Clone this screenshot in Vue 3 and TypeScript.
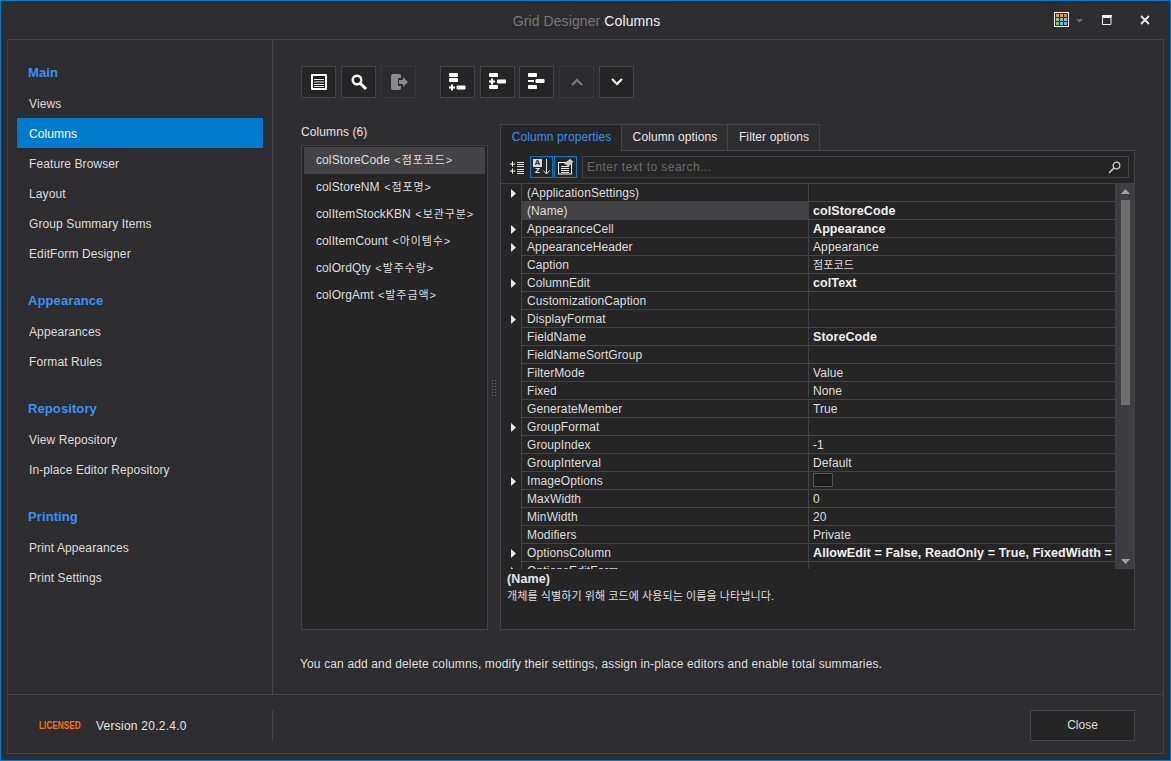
<script setup lang="ts">
interface Row { name: string; value?: string; bold?: boolean; expand?: boolean; selected?: boolean; swatch?: boolean }

const groups = [
  { title: 'Main', items: ['Views', 'Columns', 'Feature Browser', 'Layout', 'Group Summary Items', 'EditForm Designer'] },
  { title: 'Appearance', items: ['Appearances', 'Format Rules'] },
  { title: 'Repository', items: ['View Repository', 'In-place Editor Repository'] },
  { title: 'Printing', items: ['Print Appearances', 'Print Settings'] },
]

const columns = [
  { name: 'colStoreCode', ko: '점포코드' },
  { name: 'colStoreNM', ko: '점포명' },
  { name: 'colItemStockKBN', ko: '보관구분' },
  { name: 'colItemCount', ko: '아이템수' },
  { name: 'colOrdQty', ko: '발주수량' },
  { name: 'colOrgAmt', ko: '발주금액' },
]

const rows: Row[] = [
  { name: '(ApplicationSettings)', expand: true },
  { name: '(Name)', value: 'colStoreCode', bold: true, selected: true },
  { name: 'AppearanceCell', value: 'Appearance', bold: true, expand: true },
  { name: 'AppearanceHeader', value: 'Appearance', expand: true },
  { name: 'Caption', value: '점포코드' },
  { name: 'ColumnEdit', value: 'colText', bold: true, expand: true },
  { name: 'CustomizationCaption' },
  { name: 'DisplayFormat', expand: true },
  { name: 'FieldName', value: 'StoreCode', bold: true },
  { name: 'FieldNameSortGroup' },
  { name: 'FilterMode', value: 'Value' },
  { name: 'Fixed', value: 'None' },
  { name: 'GenerateMember', value: 'True' },
  { name: 'GroupFormat', expand: true },
  { name: 'GroupIndex', value: '-1' },
  { name: 'GroupInterval', value: 'Default' },
  { name: 'ImageOptions', swatch: true, expand: true },
  { name: 'MaxWidth', value: '0' },
  { name: 'MinWidth', value: '20' },
  { name: 'Modifiers', value: 'Private' },
  { name: 'OptionsColumn', value: 'AllowEdit = False, ReadOnly = True, FixedWidth =', bold: true, expand: true },
  { name: 'OptionsEditForm', expand: true },
]

const palette = ['#e0a060', '#e09a5a', '#e0805a', '#a8c878', '#7ac8b0', '#a8a8c8', '#78c878', '#68c0e8', '#78a8d8']
</script>

<template>
  <div class="window">
    <header class="titlebar">
      <div class="title"><span class="dim">Grid Designer</span> <span>Columns</span></div>
      <div class="controls">
        <div class="palette"><i v-for="c in palette" :key="c" :style="{ background: c }"></i></div>
        <svg class="caret" width="7" height="4" viewBox="0 0 7 4"><path d="M0 0h7L3.500 4z" fill="#666"/></svg>
        <svg class="max" width="10" height="10" viewBox="0 0 10 10"><path d="M.5 2.500h8.500v7H.5z" fill="none" stroke="#eee"/><path d="M0 0h10v2.500H0z" fill="#eee"/></svg>
        <svg class="close" width="10" height="10" viewBox="0 0 10 10"><path d="M1 1l8 8M9 1L1 9" stroke="#eee" stroke-width="1.800"/></svg>
      </div>
    </header>

    <div class="frame">
      <div class="upper">
        <nav class="sidebar">
          <section v-for="g in groups" :key="g.title" class="group">
            <h3>{{ g.title }}</h3>
            <a v-for="it in g.items" :key="it" :class="{ active: it === 'Columns' }">{{ it }}</a>
          </section>
        </nav>

        <main class="main">
          <div class="toolbar">
            <button class="tb">
              <svg width="16" height="16" viewBox="0 0 16 16"><rect width="16" height="16" rx="1" fill="#fff"/><rect x="2" y="2" width="12" height="12" fill="#1e1e1e"/><path d="M3 5.500h10M3 8h10M3 10.500h10M3 12.500h10" stroke="#eee"/></svg>
            </button>
            <button class="tb">
              <svg width="18" height="18" viewBox="0 0 18 18"><circle cx="7" cy="7" r="4.300" fill="none" stroke="#fff" stroke-width="2.400"/><path d="M10.500 10.500L16 16" stroke="#fff" stroke-width="3"/></svg>
            </button>
            <button class="tb off">
              <svg width="18" height="18" viewBox="0 0 18 18"><path d="M3 1h6a2 2 0 0 1 2 2v2H8v8h3v2a2 2 0 0 1-2 2H3a2 2 0 0 1-2-2V3a2 2 0 0 1 2-2z" fill="#8a8a8a"/><path d="M9 7h4V4l5 5-5 5v-3H9z" fill="#8a8a8a"/></svg>
            </button>
            <button class="tb sep">
              <svg width="18" height="18" viewBox="0 0 18 18"><g fill="#fff"><rect width="9" height="4" rx="1"/><rect y="5" width="9" height="4" rx="1"/><path d="M2 11.500h2v2h2v2H4v2H2v-2H0v-2h2z"/><rect x="7.500" y="12.500" width="9" height="4" rx="1"/></g></svg>
            </button>
            <button class="tb">
              <svg width="18" height="18" viewBox="0 0 18 18"><g fill="#fff"><rect width="9" height="4" rx="1"/><path d="M2 5.500h2v2h2v2H4v2H2v-2H0v-2h2z"/><rect x="8" y="6.500" width="9" height="4" rx="1"/><rect y="12" width="9" height="4" rx="1"/></g></svg>
            </button>
            <button class="tb tight">
              <svg width="18" height="18" viewBox="0 0 18 18"><g fill="#fff"><rect width="9" height="4" rx="1"/><rect y="7" width="6" height="2"/><rect x="7.500" y="6" width="9" height="4" rx="1"/><rect y="12" width="9" height="4" rx="1"/></g></svg>
            </button>
            <button class="tb off">
              <svg width="12" height="8" viewBox="0 0 12 8"><path d="M1 7l5-5 5 5" fill="none" stroke="#7c7c7c" stroke-width="2"/></svg>
            </button>
            <button class="tb">
              <svg width="12" height="8" viewBox="0 0 12 8"><path d="M1 1l5 5 5-5" fill="none" stroke="#fff" stroke-width="2"/></svg>
            </button>
          </div>

          <div class="body">
            <div class="col-list">
              <div class="col-label">Columns (6)</div>
              <ul class="list">
                <li v-for="(c, i) in columns" :key="c.name" :class="{ on: i === 0 }">
                  {{ c.name }} <span class="ko">&lt;{{ c.ko }}&gt;</span>
                </li>
              </ul>
            </div>

            <div class="splitter"><span class="grip"><i v-for="n in 12" :key="n"></i></span></div>

            <div class="props">
              <div class="tabs">
                <div class="tab active">Column properties</div>
                <div class="tab w2">Column options</div>
                <div class="tab w3">Filter options</div>
              </div>
              <div class="panel">
                <div class="ptools">
                  <svg class="cat" width="14" height="13" viewBox="0 0 14 13"><path d="M2.500 .5v5M0 3h5M2.500 7.500v5M0 10h5" stroke="#fff"/><path d="M7 1.500h7M7 3.500h7M7 5.500h7M7 8.500h7M7 10.500h7M7 12.500h7" stroke="#ddd"/></svg>
                  <button class="pbtn az">
                    <span class="azt"><b class="a">A</b><b>Z</b></span>
                    <svg width="7" height="16" viewBox="0 0 7 16"><path d="M3.500 0v15M.5 11.500l3 3.500 3-3.500" fill="none" stroke="#ddd"/></svg>
                  </button>
                  <button class="pbtn">
                    <svg width="17" height="16" viewBox="0 0 17 16"><rect x="1.500" y="3.500" width="13" height="11.500" fill="none" stroke="#f2f2f2"/><path d="M4 7.500h8M4 9.500h8M4 11.500h8M4 13.500h8" stroke="#e8e8e8"/><path d="M7 4.500L13 0l3.500 2.500-5 5z" fill="#c8c8c8"/></svg>
                  </button>
                  <div class="search">
                    <span>Enter text to search...</span>
                    <svg width="13" height="13" viewBox="0 0 13 13"><circle cx="8.500" cy="4.500" r="3.300" fill="none" stroke="#ccc" stroke-width="1.300"/><path d="M6 7l-5 5" stroke="#ccc" stroke-width="1.600"/></svg>
                  </div>
                </div>

                <div class="grid-wrap">
                  <div class="grid">
                    <div v-for="r in rows" :key="r.name" class="row" :class="{ sel: r.selected }">
                      <div class="exp"><svg v-if="r.expand" width="5" height="9" viewBox="0 0 5 9"><path d="M0 0l5 4.500L0 9z" fill="#e6e6e6"/></svg></div>
                      <div class="pname">{{ r.name }}</div>
                      <div class="pval" :class="{ b: r.bold, small: r.value === '점포코드' }">
                        <span v-if="r.swatch" class="swatch"></span>{{ r.value }}
                      </div>
                    </div>
                  </div>
                  <div class="scroll">
                    <svg class="up" width="9" height="5" viewBox="0 0 9 5"><path d="M0 5l4.500-5L9 5z" fill="#a0a0a0"/></svg>
                    <div class="track"><div class="thumb"></div></div>
                    <svg class="down" width="9" height="5" viewBox="0 0 9 5"><path d="M0 0l4.500 5L9 0z" fill="#a0a0a0"/></svg>
                  </div>
                </div>

                <div class="desc">
                  <strong>(Name)</strong>
                  <p>개체를 식별하기 위해 코드에 사용되는 이름을 나타냅니다.</p>
                </div>
              </div>
            </div>
          </div>

          <p class="hint">You can add and delete columns, modify their settings, assign in-place editors and enable total summaries.</p>
        </main>
      </div>

      <footer class="footer">
        <div class="foot-left">
          <span class="lic">LICENSED</span>
          <span class="ver">Version 20.2.4.0</span>
        </div>
        <div class="foot-right"><button class="closebtn">Close</button></div>
      </footer>
    </div>
  </div>
</template>

<style scoped>
* { box-sizing: border-box; }
.window {
  width: 1171px; height: 761px; background: #2d2d30; border: 1px solid #007acc;
  display: flex; flex-direction: column; overflow: hidden;
  font: 12px/14px "Liberation Sans", "Noto Sans CJK KR", sans-serif; color: #dedede; letter-spacing: .1px;
}
.titlebar { height: 38px; flex: none; position: relative; display: flex; align-items: center; justify-content: center; }
.title { font-size: 14px; margin-left: 2px; color: #f0f0f0; padding-top: 1px; }
.dim { color: #777; }
.controls { position: absolute; inset: 0; }
.palette { position: absolute; left: 1053px; top: 11px; width: 15px; height: 15px; border: 1px solid #f2f2f2; padding: 1px; display: grid; grid-template: repeat(3, 3px) / repeat(3, 3px); gap: 1px; }
.caret { position: absolute; left: 1075px; top: 18px; }
.max { position: absolute; left: 1101px; top: 14px; }
.close { position: absolute; left: 1139px; top: 14px; }

.frame { flex: 1; margin: 0 6px 6px 6px; border: 1px solid #434346; display: flex; flex-direction: column; min-height: 0; }
.upper { flex: 1; display: flex; min-height: 0; border-bottom: 1px solid #434346; }
.sidebar { width: 265px; flex: none; border-right: 1px solid #434346; padding: 18px 9px 0; }
.group { margin-bottom: 18px; }
.group h3 { margin: 0; height: 30px; padding-left: 11px; font-size: 13px; font-weight: 700; line-height: 30px; color: #3a90f0; }
.group a { display: block; height: 30px; line-height: 32px; padding-left: 12px; color: #dcdcdc; }
.group a.active { background: #007acc; color: #fff; }

.main { flex: 1; min-width: 0; padding: 26px 28px 0 28px; display: flex; flex-direction: column; }
.toolbar { display: flex; height: 32px; gap: 5px; }
.tb { width: 35px; height: 32px; padding: 0; background: #252526; border: 1px solid #434346; display: flex; align-items: center; justify-content: center; }
.tb.off { background: #2b2b2d; border-color: #363638; }
.tb.sep { margin-left: 19px; }
.tb.tight { margin-left: -1px; }

.body { display: flex; height: 506px; margin-top: 26px; }
.col-list { width: 187px; flex: none; display: flex; flex-direction: column; }
.col-label { height: 21px; padding-top: 1px; color: #e4e4e4; }
.list { flex: 1; margin: 0; padding: 1px 2px; list-style: none; background: #252526; border: 1px solid #434346; }
.list li { height: 27px; line-height: 27px; padding-left: 12px; color: #dedede; white-space: nowrap; }
.list li.on { background: #434346; }
.ko { font-size: 11px; letter-spacing: .9px; margin-left: 1px; }
.splitter { width: 12px; flex: none; margin-top: 21px; position: relative; background: #2d2d30; display: flex; align-items: center; justify-content: center; }
.grip { display: grid; grid-template-columns: repeat(2, 2px); gap: 2px 1px; margin-top: 0; }
.grip i { width: 1px; height: 1px; background: #6a6a6a; }

.props { flex: 1; min-width: 0; display: flex; flex-direction: column; }
.tabs { display: flex; height: 27px; flex: none; margin-bottom: -1px; position: relative; }
.tab { width: 122px; padding-left: 1px; border: 1px solid #434346; border-left: none; background: #2d2d30; text-align: center; line-height: 24px; color: #e6e6e6; }
.tab.active { background: #252526; color: #3a90f0; border-left: 1px solid #434346; border-bottom: none; }
.tab.w2 { width: 106px; }
.tab.w3 { width: 92px; }
.panel { flex: 1; background: #252526; border: 1px solid #434346; display: flex; flex-direction: column; min-height: 0; }
.ptools { height: 32px; flex: none; display: flex; align-items: center; padding: 5px 5px 5px 9px; }
.cat { margin-right: 6px; }
.pbtn { width: 23px; height: 22px; padding: 0; background: #252526; border: 1px solid #007acc; display: flex; align-items: center; justify-content: center; margin-right: 1px; }
.azt { display: flex; flex-direction: column; align-items: center; color: #f0f0f0; font-size: 8px; line-height: 8px; margin-right: 1px; }
.azt b { font-weight: 700; letter-spacing: 0; }
.azt .a { background: #ddd; color: #252526; width: 9px; text-align: center; }
.search { flex: 1; margin-left: 4px; height: 22px; border: 1px solid #434346; display: flex; align-items: center; justify-content: space-between; padding: 0 7px 0 4px; color: #6a6a6a; letter-spacing: .45px; }

.grid-wrap { height: 386px; flex: none; display: flex; overflow: hidden; }
.grid { flex: 1; min-width: 0; overflow: hidden; border-top: 1px solid #434346; }
.row { height: 18px; display: flex; line-height: 18px; border-bottom: 1px solid #434346; white-space: nowrap; }
.exp { width: 20px; flex: none; background: #252526; display: flex; align-items: center; padding-left: 10px; margin-bottom: -1px; }
.pname { width: 288px; flex: none; padding-left: 5px; border-left: 1px solid #434346; border-right: 1px solid #434346; color: #dedede; }
.pval { flex: 1; min-width: 0; overflow: hidden; padding-left: 4px; color: #dedede; border-right: 1px solid #434346; }
.pval.b { font-weight: 700; font-size: 12.500px; color: #f0f0f0; }
.pval.small { font-size: 11px; }
.row.sel .pname { background: #434346; }
.swatch { display: inline-block; width: 20px; height: 14px; margin-top: 1px; background: #1c1c1c; border: 1px solid #555; }
.scroll { width: 18px; flex: none; background: #3e3e42; display: flex; flex-direction: column; align-items: center; padding: 6px 0 5px; }
.track { flex: 1; width: 100%; padding: 6px 0 0 5px; }
.thumb { width: 9px; height: 205px; background: #6e6e6e; }

.desc { flex: 1; padding: 3px 0 0 6px; }
.desc strong { display: block; color: #e8e8e8; font-size: 12.500px; line-height: 15px; }
.desc p { margin: 2px 0 0; font-size: 11px; line-height: 14px; color: #dedede; letter-spacing: .09px; }

.hint { margin: 27px 0 0 -1px; color: #dedede; white-space: nowrap; letter-spacing: .14px; }

.footer { height: 58px; flex: none; display: flex; align-items: center; padding-top: 2px; }
.foot-left { width: 265px; height: 31px; flex: none; border-right: 1px solid #434346; display: flex; align-items: center; padding-left: 31px; }
.lic { font-size: 11px; font-weight: 700; color: #f27410; width: 57px; transform: scaleX(.74); transform-origin: left; white-space: nowrap; }
.ver { color: #e4e4e4; letter-spacing: .25px; margin-top: 1px; }
.foot-right { flex: 1; display: flex; justify-content: flex-end; padding-right: 28px; }
.closebtn { width: 105px; height: 31px; background: #252526; border: 1px solid #434346; color: #dedede; font: inherit; }
</style>

<style>
html, body { margin: 0; background: #2d2d30; }
</style>
